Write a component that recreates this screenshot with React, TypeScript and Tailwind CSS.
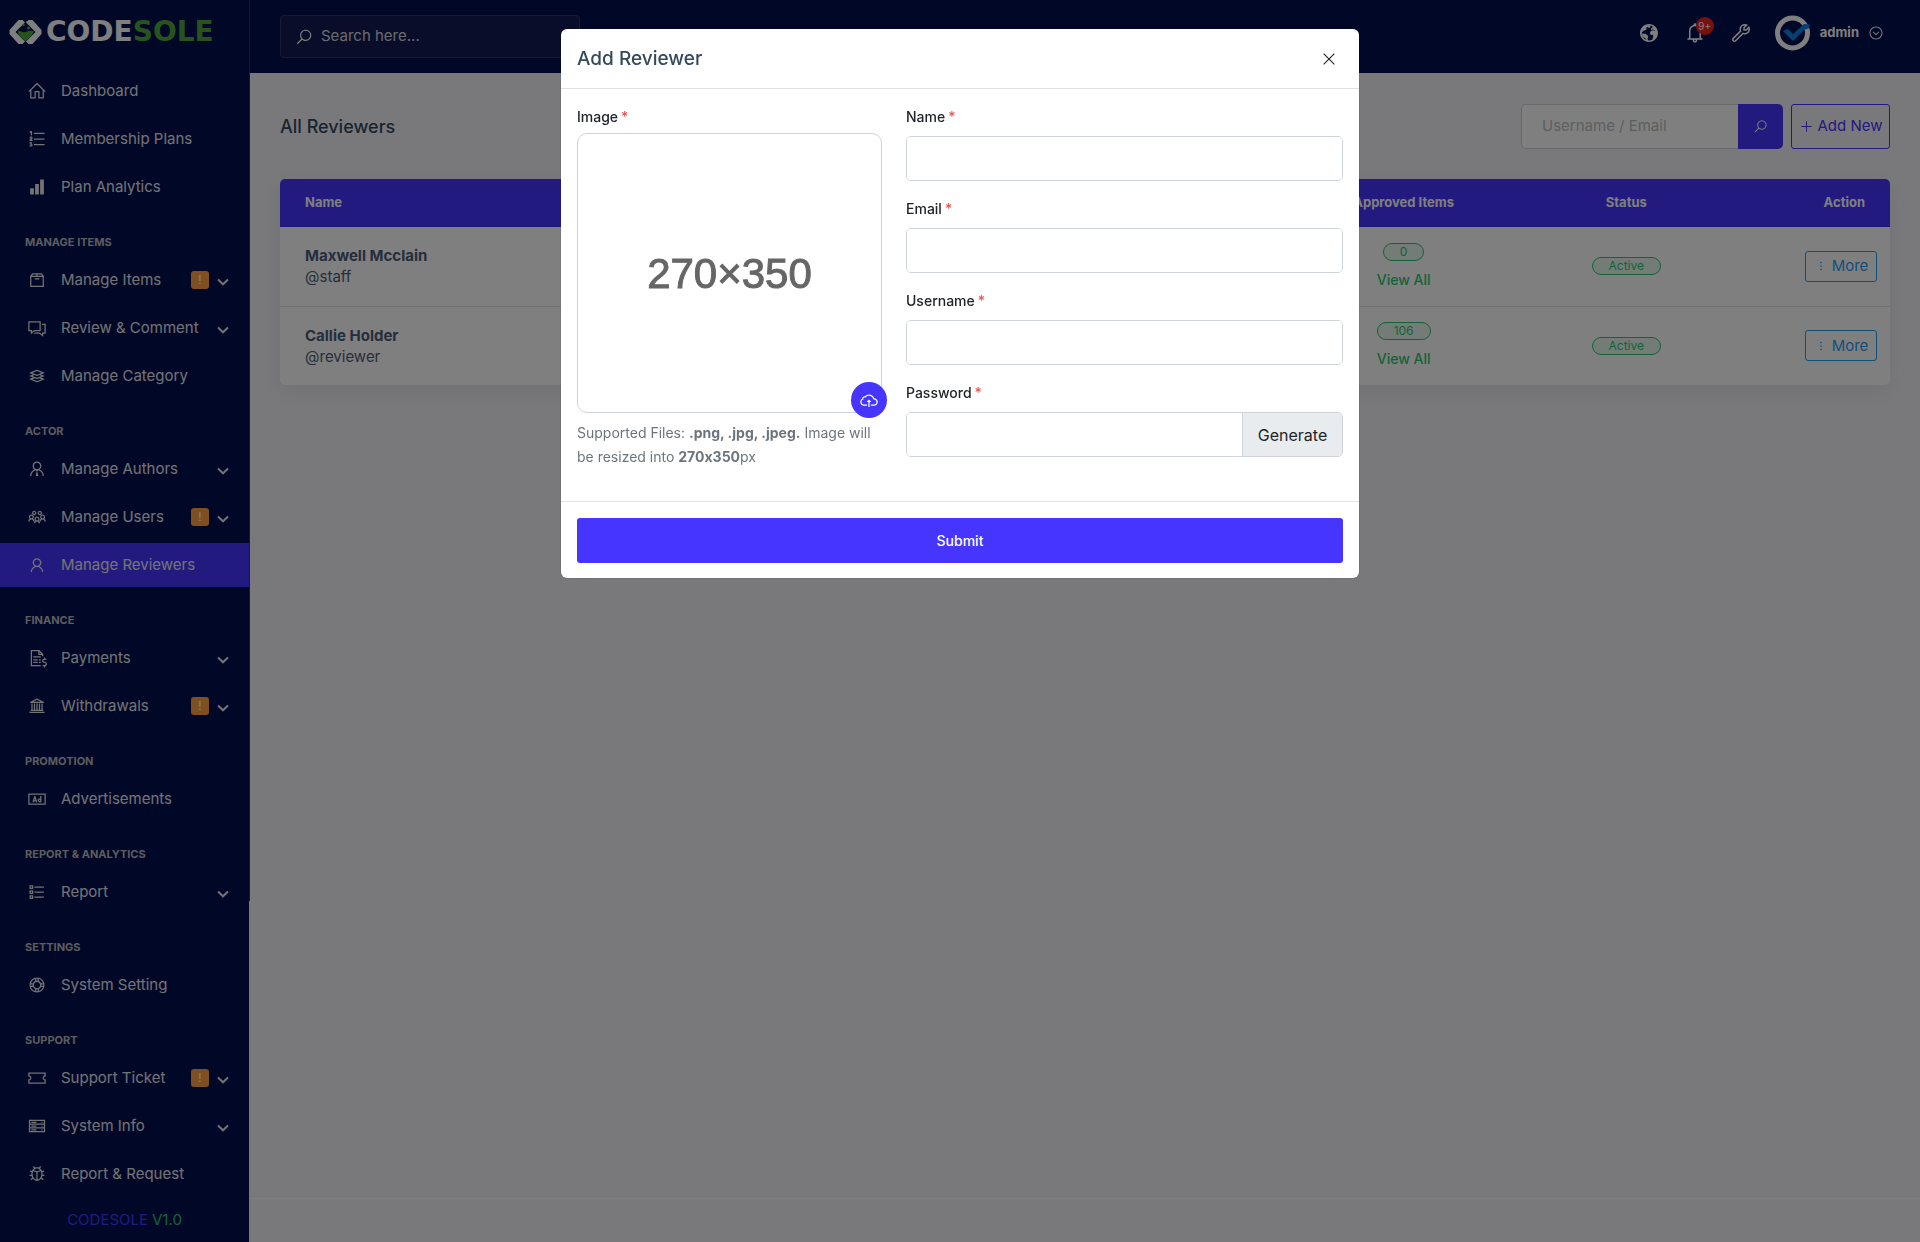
import type { ReactNode } from "react";
import type { IconType } from "react-icons";
import {
  LiaAdSolid,
  LiaBellSolid,
  LiaBoxSolid,
  LiaBugSolid,
  LiaChevronCircleDownSolid,
  LiaCloudUploadAltSolid,
  LiaCommentsSolid,
  LiaEllipsisVSolid,
  LiaFileInvoiceDollarSolid,
  LiaGlobeSolid,
  LiaHomeSolid,
  LiaLayerGroupSolid,
  LiaLifeRingSolid,
  LiaListOlSolid,
  LiaListSolid,
  LiaPlusSolid,
  LiaSearchSolid,
  LiaServerSolid,
  LiaSignalSolid,
  LiaTicketAltSolid,
  LiaTimesSolid,
  LiaUniversitySolid,
  LiaUserSolid,
  LiaUserTieSolid,
  LiaUsersSolid,
  LiaWrenchSolid,
} from "react-icons/lia";

type Item = { label: string; icon: IconType; alert?: boolean; sub?: boolean; active?: boolean };
type Section = { title?: string; items: Item[] };

const sections: Section[] = [
  {
    items: [
      { label: "Dashboard", icon: LiaHomeSolid },
      { label: "Membership Plans", icon: LiaListOlSolid },
      { label: "Plan Analytics", icon: LiaSignalSolid },
    ],
  },
  {
    title: "MANAGE ITEMS",
    items: [
      { label: "Manage Items", icon: LiaBoxSolid, alert: true, sub: true },
      { label: "Review & Comment", icon: LiaCommentsSolid, sub: true },
      { label: "Manage Category", icon: LiaLayerGroupSolid },
    ],
  },
  {
    title: "ACTOR",
    items: [
      { label: "Manage Authors", icon: LiaUserTieSolid, sub: true },
      { label: "Manage Users", icon: LiaUsersSolid, alert: true, sub: true },
      { label: "Manage Reviewers", icon: LiaUserSolid, active: true },
    ],
  },
  {
    title: "FINANCE",
    items: [
      { label: "Payments", icon: LiaFileInvoiceDollarSolid, sub: true },
      { label: "Withdrawals", icon: LiaUniversitySolid, alert: true, sub: true },
    ],
  },
  { title: "PROMOTION", items: [{ label: "Advertisements", icon: LiaAdSolid }] },
  { title: "REPORT & ANALYTICS", items: [{ label: "Report", icon: LiaListSolid, sub: true }] },
  { title: "SETTINGS", items: [{ label: "System Setting", icon: LiaLifeRingSolid }] },
  {
    title: "SUPPORT",
    items: [
      { label: "Support Ticket", icon: LiaTicketAltSolid, alert: true, sub: true },
      { label: "System Info", icon: LiaServerSolid, sub: true },
      { label: "Report & Request", icon: LiaBugSolid },
    ],
  },
];

const reviewers = [
  { name: "Maxwell Mcclain", handle: "@staff", approved: "0" },
  { name: "Callie Holder", handle: "@reviewer", approved: "106" },
];

function Logo() {
  return (
    <a href="#" aria-label="Codesole" className="flex h-[69px] shrink-0 items-center gap-1 pb-[6px] pl-[9px]">
      <svg viewBox="0 0 33 24" className="h-6 w-[33px] shrink-0">
        <path d="M13.5 0 16 2.6 6.5 12 16 21.4 13.5 24H9.5L0.5 14V10L9.5 0Z" fill="#fff" />
        <path d="M19.5 0 17 2.6 26.5 12 17 21.4 19.5 24H23.5L32.5 14V10L23.5 0Z" fill="#fff" />
        <path d="M8.500 11.500C11 9.500 14 13.500 17 12S22 10.500 25 11.300L23 15 16.500 21.500 10 15Z" fill="#4fa83a" />
        <circle cx="14.500" cy="5" r="1.200" fill="#4fa83a" />
        <circle cx="19.500" cy="8" r="1.500" fill="#4fa83a" />
        <circle cx="17.500" cy="1.500" r="0.800" fill="#4fa83a" />
      </svg>
      <span className="font-['DejaVu_Sans',sans-serif] text-[28px] leading-6 font-bold text-white">
        CODE<span className="text-[#4fa83a]">SOLE</span>
      </span>
    </a>
  );
}

function Chevron() {
  return (
    <svg viewBox="0 0 12 8" className="mt-1 ml-2 h-2 w-3 shrink-0" fill="none" stroke="currentColor" strokeWidth="2">
      <path d="M1 1.500 6 6.300 11 1.500" />
    </svg>
  );
}

function Sidebar() {
  return (
    <aside className="flex w-[249px] shrink-0 flex-col bg-[#030f4f]">
      <Logo />
      <nav className="flex-1">
        {sections.map((section) => (
          <section key={section.title ?? "main"}>
            {section.title && (
              <h2 className="mt-6 mb-[7px] pl-[25px] text-[11px] leading-[18px] font-bold text-[#b9babf]">
                {section.title}
              </h2>
            )}
            <ul className="flex flex-col gap-1">
              {section.items.map(({ label, icon: Icon, alert, sub, active }) => (
                <li key={label}>
                  <a
                    href="#"
                    className={`flex h-11 items-center pr-5 pl-[27px] text-[15px] text-[#e6e6ea] ${active ? "bg-[#4634ff]" : ""}`}
                  >
                    <Icon className="mr-[14px] size-5 shrink-0" />
                    <span className="flex-1 whitespace-nowrap">{label}</span>
                    {alert && (
                      <span className="flex size-[18px] items-center justify-center rounded-[3px] bg-[#ff9f43] text-xs text-white">
                        !
                      </span>
                    )}
                    {sub && <Chevron />}
                  </a>
                </li>
              ))}
            </ul>
          </section>
        ))}
      </nav>
      <p className="flex h-11 items-center justify-center gap-1 text-[15px]">
        <span className="text-[#4634ff]">CODESOLE</span>
        <span className="text-[#28c76f]">V1.0</span>
      </p>
    </aside>
  );
}

function Topbar() {
  return (
    <header className="flex h-[73px] shrink-0 items-center justify-between bg-[#030f4f] pr-9 pl-[30px] text-white">
      <label className="flex h-[43px] w-[300px] items-center gap-2 rounded border border-[#2c3468] bg-[#131b54] pl-[14px]">
        <LiaSearchSolid className="size-[18px] shrink-0" />
        <input
          type="search"
          aria-label="Search"
          placeholder="Search here..."
          className="w-full bg-transparent text-[15px] outline-none placeholder:text-[#d5d6de]"
        />
      </label>
      <div className="flex items-center pb-[7px]">
        <button type="button" aria-label="Visit website">
          <LiaGlobeSolid className="size-6" />
        </button>
        <button type="button" aria-label="Notifications" className="relative ml-[22px]">
          <LiaBellSolid className="size-6" />
          <span className="absolute -top-1 left-[13px] flex size-[18px] items-center justify-center rounded-full bg-[#eb2222] text-[10px]">
            9+
          </span>
        </button>
        <button type="button" aria-label="System tools" className="ml-[22px]">
          <LiaWrenchSolid className="size-6" />
        </button>
        <button type="button" className="ml-[22px] flex items-center text-[13px] font-bold">
          <svg viewBox="0 0 36 36" className="size-9">
            <circle cx="17.500" cy="18" r="15" fill="none" stroke="#fff" strokeWidth="5" />
            <path d="M8 16 13 14 18 19 29 9 34.500 9.500V13L29 15 18 26Z" fill="#0b7fe6" />
          </svg>
          <span className="ml-[9px]">admin</span>
          <LiaChevronCircleDownSolid className="ml-[9px] size-4" />
        </button>
      </div>
    </header>
  );
}

function Pill({ children }: { children: ReactNode }) {
  return (
    <span className="inline-flex h-[18px] items-center rounded-full border border-[#28c76f] bg-[#28c76f]/10 px-4 text-xs text-[#28c76f]">
      {children}
    </span>
  );
}

function ReviewersPage() {
  return (
    <main className="flex-1 px-[30px] pt-[31px]">
      <div className="mb-[30px] flex items-center justify-between">
        <h1 className="text-[18px] font-medium text-[#34495e]">All Reviewers</h1>
        <div className="flex gap-2">
          <form className="flex h-[45px]">
            <input
              type="search"
              aria-label="Username / Email"
              placeholder="Username / Email"
              className="w-[217px] rounded-l-[5px] border border-r-0 border-[#ced4da] bg-white px-5 text-[15px] outline-none placeholder:text-[#bcbcc0]"
            />
            <button
              type="submit"
              aria-label="Search"
              className="flex w-[45px] items-center justify-center rounded-r-[5px] bg-[#4634ff] text-white"
            >
              <LiaSearchSolid className="size-[15px]" />
            </button>
          </form>
          <button
            type="button"
            className="flex h-[45px] w-[99px] items-center justify-center gap-1 rounded-[3px] border border-[#4634ff] text-[15px] whitespace-nowrap text-[#4634ff]"
          >
            <LiaPlusSolid className="size-[15px] shrink-0" />
            Add New
          </button>
        </div>
      </div>

      <div className="overflow-hidden rounded-[5px] bg-white shadow-[0_6px_20px_rgba(90,90,110,0.1)]">
        <table className="w-full table-fixed text-[15px] text-[#5b6e88]">
          <thead>
            <tr className="h-12 bg-[#4634ff] text-[13px] text-white">
              <th className="pl-[25px] text-left font-bold">Name</th>
              <th className="w-[220px] font-bold">Approved Items</th>
              <th className="w-[14%] font-bold">Status</th>
              <th className="w-[151px] pr-[25px] text-right font-bold">Action</th>
            </tr>
          </thead>
          <tbody>
            {reviewers.map((r) => (
              <tr key={r.handle} className="h-[79px] border-b border-[#e2e2e6] last:border-b-0">
                <td className="pl-[25px] leading-[21px] text-[#4a5d78]">
                  <span className="block font-bold">{r.name}</span>
                  <span className="block">{r.handle}</span>
                </td>
                <td>
                  <div className="flex flex-col items-center gap-[9px]">
                    <Pill>{r.approved}</Pill>
                    <a href="#" className="text-sm leading-5 font-medium text-[#28c76f]">
                      View All
                    </a>
                  </div>
                </td>
                <td>
                  <div className="flex justify-center">
                    <Pill>Active</Pill>
                  </div>
                </td>
                <td className="pr-[13px]">
                  <button
                    type="button"
                    className="ml-auto flex h-[31px] w-[72px] items-center justify-center gap-1 rounded-[3px] border border-[#1e9ff2] text-[15px] text-[#1e9ff2]"
                  >
                    <LiaEllipsisVSolid className="size-[14px]" />
                    More
                  </button>
                </td>
              </tr>
            ))}
          </tbody>
        </table>
      </div>
    </main>
  );
}

function FieldLabel({ htmlFor, children }: { htmlFor: string; children: ReactNode }) {
  return (
    <label htmlFor={htmlFor} className="block text-sm leading-5 font-medium text-[#212529]">
      {children}
      <span className="ml-[3px] text-[#ea5455]">*</span>
    </label>
  );
}

function Field({ id, label, type, action }: { id: string; label: string; type: string; action?: ReactNode }) {
  return (
    <div className="flex flex-col gap-[9px]">
      <FieldLabel htmlFor={id}>{label}</FieldLabel>
      <div className="flex h-[45px] overflow-hidden rounded-[5px] border border-[#ced4da]">
        <input id={id} type={type} className="min-w-0 flex-1 bg-white px-3 text-[15px] outline-none" />
        {action}
      </div>
    </div>
  );
}

function AddReviewerModal() {
  return (
    <div className="fixed inset-0 flex items-start justify-center bg-black/50 pt-[29px]">
      <form
        role="dialog"
        aria-labelledby="modal-title"
        className="w-full max-w-[798px] rounded-md bg-white shadow-[0_0_1px_rgba(0,0,0,0.6)]"
      >
        <div className="flex h-[60px] items-center justify-between border-b border-[#dee2e6] px-4">
          <h2 id="modal-title" className="pt-[2px] text-[19px] font-medium text-[#34495e]">
            Add Reviewer
          </h2>
          <button type="button" aria-label="Close" className="p-[5px] text-[#212529]">
            <LiaTimesSolid className="size-[18px]" />
          </button>
        </div>

        <div className="flex gap-6 px-4 pt-[18px] pb-8">
          <div className="w-[305px]">
            <FieldLabel htmlFor="image">Image</FieldLabel>
            <div className="relative mt-[6px] flex h-[280px] items-center justify-center rounded-[10px] border border-[#ced4da]">
              <span className="font-['Liberation_Sans',sans-serif] text-[42px] text-[#666] [-webkit-text-stroke:1px_#666]">
                270×350
              </span>
              <input id="image" type="file" accept=".png,.jpg,.jpeg" className="sr-only" />
              <label
                htmlFor="image"
                aria-label="Upload image"
                className="absolute -right-[6px] -bottom-[6px] flex size-9 items-center justify-center rounded-full bg-[#4634ff] text-white"
              >
                <LiaCloudUploadAltSolid className="size-5" />
              </label>
            </div>
            <p className="mt-2 text-sm leading-6 text-[#6c757d] [font-feature-settings:'calt'_0]">
              Supported Files: <b>.png, .jpg, .jpeg.</b> Image will be resized into <b>270x350</b>px
            </p>
          </div>

          <div className="flex flex-1 flex-col gap-[18px]">
            <Field id="name" label="Name" type="text" />
            <Field id="email" label="Email" type="email" />
            <Field id="username" label="Username" type="text" />
            <Field
              id="password"
              label="Password"
              type="text"
              action={
                <button
                  type="button"
                  className="w-[100px] border-l border-[#ced4da] bg-[#e9ecef] text-base text-[#212529]"
                >
                  Generate
                </button>
              }
            />
          </div>
        </div>

        <div className="border-t border-[#dee2e6] px-4 pt-4 pb-[15px]">
          <button type="submit" className="h-[45px] w-full rounded-[3px] bg-[#4634ff] text-sm font-medium text-white">
            Submit
          </button>
        </div>
      </form>
    </div>
  );
}

export default function App() {
  return (
    <div className="flex min-h-screen bg-[#f3f3f9] font-[Inter,sans-serif]">
      <Sidebar />
      <div className="h-[901px] w-px bg-[#2c3354]" />
      <div className="flex min-w-0 flex-1 flex-col">
        <Topbar />
        <ReviewersPage />
        <div className="h-11 border-t border-white" />
      </div>
      <AddReviewerModal />
    </div>
  );
}
